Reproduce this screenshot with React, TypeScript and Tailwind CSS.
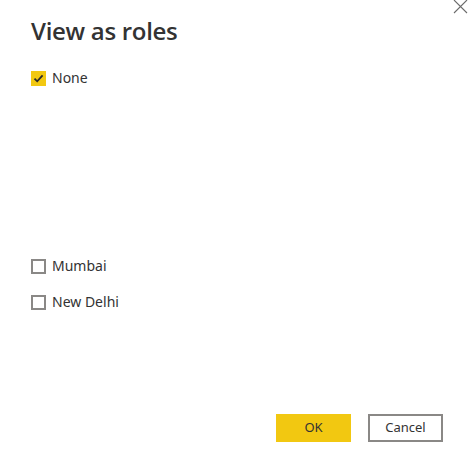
import React, { useState } from "react";

type Role = { name: string; checked: boolean };

const font = { fontFamily: '"Segoe UI", "Noto Sans", "Open Sans", sans-serif' };

function Check({ checked }: { checked: boolean }) {
  if (checked) {
    return (
      <span className="flex h-[15px] w-[15px] items-center justify-center bg-[#f2c811]">
        <svg width="11" height="11" viewBox="0 0 11 11" fill="none">
          <path d="M1.5 5.6 L4.2 8.3 L9.6 2.3" stroke="#2b2b2b" strokeWidth="1.8" />
        </svg>
      </span>
    );
  }
  return <span className="h-[15px] w-[15px] border-2 border-[#8a8886] bg-white" />;
}

function RoleRow({ role, onToggle }: { role: Role; onToggle: () => void }) {
  return (
    <label className="flex cursor-pointer items-center gap-[6px]" onClick={onToggle}>
      <Check checked={role.checked} />
      <span className="text-[14px] leading-[20px] text-[#333]">{role.name}</span>
    </label>
  );
}

export default function App() {
  const [none, setNone] = useState(true);
  const [roles, setRoles] = useState<Role[]>([
    { name: "Mumbai", checked: false },
    { name: "New Delhi", checked: false },
  ]);

  return (
    <div className="relative h-[467px] w-[475px] bg-white" style={font}>
      <button className="absolute right-[7px] top-[-1px] text-[#666]" aria-label="Close">
        <svg width="15" height="15" viewBox="0 0 15 15">
          <path d="M1 1 L14 14 M14 1 L1 14" stroke="#6b6b6b" strokeWidth="1.1" />
        </svg>
      </button>

      <div className="flex h-full flex-col pl-[31px] pr-[32px]">
        <h1
          className="mt-[14px] text-[24px] font-semibold leading-[34px] text-[#333]"
          style={{ fontFamily: '"Open Sans", "Noto Sans", sans-serif', letterSpacing: "-0.3px" }}
        >
          View as roles
        </h1>

        <div className="mt-[20px]">
          <RoleRow role={{ name: "None", checked: none }} onToggle={() => setNone(!none)} />
        </div>

        <div className="mt-[168px] flex flex-col gap-[16px]">
          {roles.map((r, i) => (
            <RoleRow
              key={r.name}
              role={r}
              onToggle={() =>
                setRoles(roles.map((x, j) => (j === i ? { ...x, checked: !x.checked } : x)))
              }
            />
          ))}
        </div>

        <div className="mt-auto mb-[25px] flex justify-end gap-[17px]">
          <button className="h-[28px] w-[75px] bg-[#f2c811] text-[13px] text-[#333]">OK</button>
          <button className="h-[28px] w-[75px] border-2 border-[#8a8886] bg-white text-[13px] text-[#333]">
            Cancel
          </button>
        </div>
      </div>
    </div>
  );
}
